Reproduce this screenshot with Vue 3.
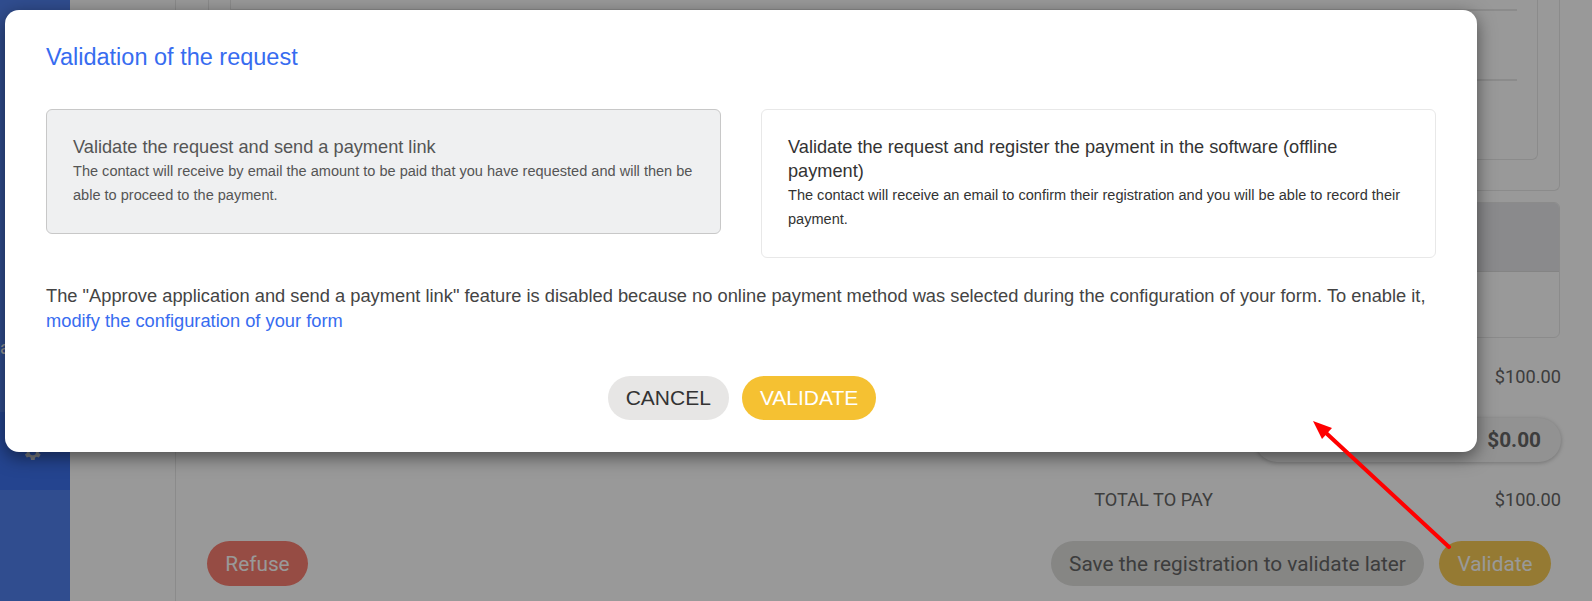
<template>
  <div class="page">
    <aside class="sidebar">
      <div class="nav-label">a</div>
      <div class="nav-item">
        <svg class="gear" viewBox="0 0 24 24" width="22" height="22">
          <path fill="#c9cdd6" d="M19.400 13a7.500 7.500 0 0 0 0-2l2.100-1.600-2-3.500-2.500 1a7.600 7.600 0 0 0-1.700-1L14.900 3.200h-4l-.4 2.700a7.600 7.600 0 0 0-1.700 1l-2.500-1-2 3.500L6.400 11a7.500 7.500 0 0 0 0 2l-2.100 1.600 2 3.500 2.500-1c.5.4 1.100.7 1.700 1l.4 2.700h4l.4-2.700c.6-.3 1.200-.6 1.700-1l2.500 1 2-3.500zM12.900 15.500a3.500 3.500 0 1 1 0-7 3.500 3.500 0 0 1 0 7z" />
        </svg>
      </div>
    </aside>

    <main class="content">
      <div class="panel">
        <div class="outer-card">
          <div class="inner-card">
            <div class="rule"></div>
            <div class="rule second"></div>
          </div>
        </div>
        <div class="table-card">
          <div class="table-head"></div>
        </div>
        <div class="amount-row"><span>$100.00</span></div>
        <div class="pill-row"><div class="pill">$0.00</div></div>
        <div class="total-row"><span class="total-label">TOTAL TO PAY</span><span>$100.00</span></div>
        <div class="actions">
          <button class="btn refuse">Refuse</button>
          <button class="btn save">Save the registration to validate later</button>
          <button class="btn validate">Validate</button>
        </div>
      </div>
    </main>

    <div class="scrim">
      <section class="modal">
        <h2 class="modal-title">Validation of the request</h2>
        <div class="choices">
          <div
            v-for="choice in choices"
            :key="choice.title"
            class="choice"
            :class="{ disabled: choice.disabled }"
          >
            <div class="choice-title">{{ choice.title }}</div>
            <div class="choice-text">{{ choice.text }}</div>
          </div>
        </div>
        <p class="notice">
          The "Approve application and send a payment link" feature is disabled because no online payment method was selected during the configuration of your form. To enable it,
          <a class="notice-link">modify the configuration of your form</a>
        </p>
        <div class="modal-actions">
          <button class="modal-btn cancel">CANCEL</button>
          <button class="modal-btn confirm">VALIDATE</button>
        </div>
      </section>
    </div>

    <svg class="arrow" viewBox="0 0 1592 601" width="1592" height="601">
      <line x1="1449" y1="547" x2="1325" y2="432" stroke="#f00" stroke-width="4" stroke-linecap="round" />
      <polygon points="1313,421 1332,428 1322,439" fill="#f00" />
    </svg>
  </div>
</template>

<script setup>
const choices = [
  {
    title: 'Validate the request and send a payment link',
    text: 'The contact will receive by email the amount to be paid that you have requested and will then be able to proceed to the payment.',
    disabled: true
  },
  {
    title: 'Validate the request and register the payment in the software (offline payment)',
    text: 'The contact will receive an email to confirm their registration and you will be able to record their payment.',
    disabled: false
  }
]
</script>

<style>
html, body { margin: 0; overflow: hidden; }
</style>

<style scoped>
.page { position: relative; display: flex; width: 1592px; height: 601px; overflow: hidden; background: #fff; font-family: Roboto, sans-serif; color: #666; }

.sidebar { display: flex; flex-direction: column; width: 70px; flex-shrink: 0; background: #5181ee; overflow: hidden; }
.nav-label { box-sizing: border-box; height: 412px; padding-top: 338px; font-size: 18px; line-height: 20px; color: #fff; }
.nav-item { display: flex; justify-content: center; align-items: flex-start; height: 78px; padding-top: 29px; padding-right: 6px; box-sizing: border-box; background: #3d72ee; }
.gear { display: block; }

.content { flex: 1; padding: 0 31px 0 105px; }
.panel { height: 601px; box-sizing: border-box; padding-left: 32px; border-left: 1px solid #e8e8e8; }

.outer-card { box-sizing: border-box; height: 191px; margin-right: 1px; padding: 0 21px; border: 1px solid #e8e8e8; border-top: none; border-radius: 0 0 6px 6px; }
.inner-card { box-sizing: border-box; height: 160px; padding: 9px 20px 0 0; border: 1px solid #e8e8e8; border-top: none; border-radius: 0 0 6px 6px; }
.rule { height: 2px; background: #e8e8e8; }
.rule.second { margin-top: 68px; }

.table-card { box-sizing: border-box; height: 136px; margin: 11px 1px 0 0; border: 1px solid #e8e8e8; border-radius: 6px; }
.table-head { height: 68px; background: #e6e7e9; border-radius: 5px 5px 0 0; border-bottom: 1px solid #dcdcdc; }

.amount-row, .total-row { display: flex; justify-content: flex-end; font-size: 18.2px; line-height: 24px; }
.amount-row { margin-top: 27px; }
.pill-row { display: flex; justify-content: flex-end; margin-top: 29px; }
.pill { box-sizing: border-box; width: 306px; height: 44px; padding-right: 20px; border-radius: 22px; text-align: right; font-size: 20.8px; font-weight: 700; line-height: 44px; background: #f3f3f3; box-shadow: 0 1px 4px rgba(0, 0, 0, 0.25); }
.total-row { margin-top: 26px; }
.total-label { margin-right: 282px; }

.actions { display: flex; align-items: center; margin-top: 29px; padding-right: 10px; margin-left: -1px; }
.btn { height: 45px; border: none; border-radius: 23px; font-family: Roboto, sans-serif; font-size: 20.8px; }
.refuse { width: 101px; margin-right: auto; background: #fb7f72; color: #fff; }
.save { width: 373px; margin-right: 15px; background: #dfdfdd; color: #666; }
.validate { width: 112px; background: #f8cc55; color: #fff; }

.scrim { position: absolute; inset: 0; box-sizing: border-box; padding: 10px 0 0 5px; background: rgba(0, 0, 0, 0.4); }
.modal { box-sizing: border-box; width: 1472px; height: 442px; padding: 0 41px; background: #fff; border-radius: 14px; box-shadow: 0 5px 18px rgba(0, 0, 0, 0.5); font-family: "Liberation Sans", Arial, sans-serif; }
.modal-title { margin: 0; padding-top: 32px; font-size: 23.5px; font-weight: 400; line-height: 30px; color: #376cf0; }

.choices { display: grid; grid-template-columns: 675px 675px; gap: 40px; align-items: start; margin-top: 37px; }
.choice { padding: 25px 24px 26px 26px; border: 1px solid #e8e8e8; border-radius: 6px; color: #333; }
.choice.disabled { background: #eff0f1; border-color: #c8c8c8; color: #555; }
.choice-title { font-size: 18.2px; line-height: 24px; }
.choice-text { font-size: 14.56px; line-height: 24px; }

.notice { margin: 0; padding-top: 25px; font-size: 18.3px; line-height: 25px; color: #444; }
.notice-link { color: #376cf0; }

.modal-actions { display: flex; justify-content: center; gap: 13px; margin-top: 43px; padding-left: 2px; }
.modal-btn { height: 44px; padding: 0 18px; border: none; border-radius: 22px; font-family: "Liberation Sans", Arial, sans-serif; font-size: 21px; }
.cancel { background: #e7e6e5; color: #333; }
.confirm { background: #f5c132; color: #fff; }

.arrow { position: absolute; top: 0; left: 0; pointer-events: none; }
</style>
